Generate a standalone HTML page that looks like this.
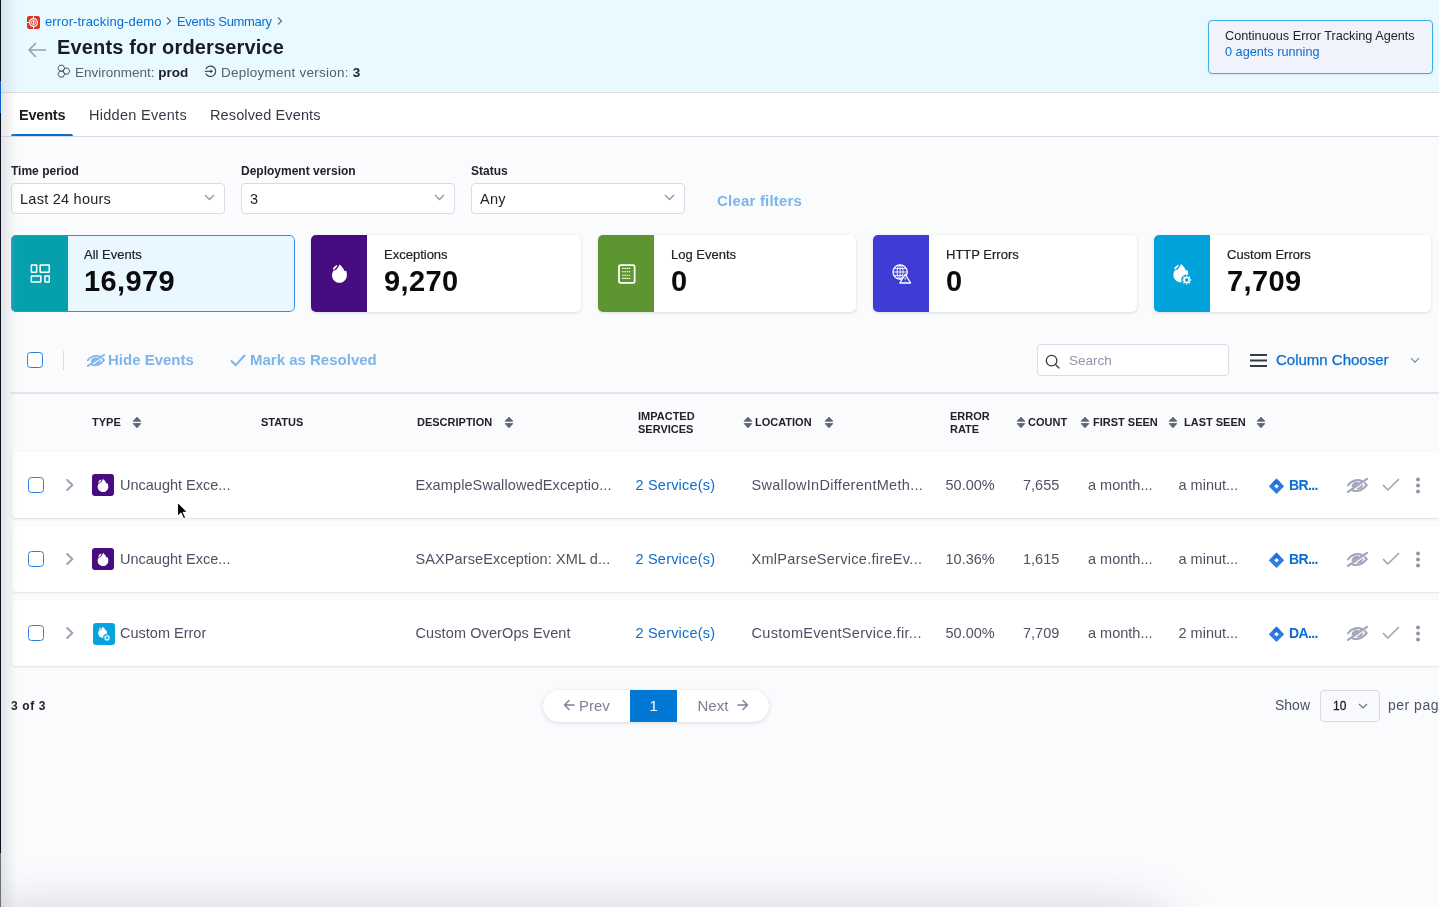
<!DOCTYPE html>
<html><head><meta charset="utf-8">
<style>
*{box-sizing:border-box;margin:0;padding:0}
html,body{width:1439px;height:907px;overflow:hidden;background:#FAFBFD;font-family:"Liberation Sans",sans-serif;color:#22222A}
#root{position:absolute;left:0;top:0;width:1439px;height:907px;overflow:hidden;will-change:transform;background:#FAFBFD}
.a{position:absolute;white-space:nowrap}
#hdr{position:absolute;left:0;top:0;width:1439px;height:93px;background:#E8F9FF;border-bottom:1px solid #D7D9E3}
#tabs{position:absolute;left:0;top:93px;width:1439px;height:44px;background:#fff;border-bottom:1px solid #D9DAE5}
.crumb{color:#0B6DD0;font-size:13px;line-height:13px}
.sub{color:#5A5C70;font-size:13.5px;line-height:14px}
.sub b{color:#22222A;font-weight:700}
.tab{font-size:14.5px;line-height:15px;color:#383946}
.lbl{font-size:12px;line-height:12px;font-weight:700;color:#22222A}
.dd{position:absolute;top:182.5px;width:214px;height:31.5px;background:#fff;border:1px solid #D9DAE5;border-radius:4px}
.ddt{font-size:14.5px;line-height:15px;color:#22222A}
.card{position:absolute;top:235px;height:77px;background:#fff;border-radius:5px;box-shadow:0 0 1px rgba(40,41,61,.08),0 1px 3px rgba(96,97,112,.18);overflow:hidden}
.card .ic{position:absolute;left:0;top:0;width:56px;height:77px}
.card .ct{position:absolute;left:73px;top:13px;font-size:13px;line-height:13px;color:#22222A;-webkit-text-stroke:0.2px #22222A}
.card .cn{position:absolute;left:73px;top:32px;font-size:29px;line-height:29px;font-weight:700;color:#0B0B0D;letter-spacing:0.4px}
.card .ov{position:absolute;left:0;top:0;right:0;bottom:0;border:1.5px solid #3C8DDF;border-radius:5px}
.th{font-size:11px;line-height:13px;font-weight:700;color:#22222A}
.row{position:absolute;left:12px;width:1440px;height:66px;background:#fff;border-radius:4px;box-shadow:0 0 1px rgba(40,41,61,.06),0 1px 2px rgba(96,97,112,.16)}
.td{font-size:14.5px;line-height:15px;color:#4F5163}
.lnk{color:#0B6DD0}
.cb{position:absolute;width:16px;height:16px;border:1.5px solid #2A80DC;border-radius:3.5px;background:#fff}
</style></head>
<body><div id="root">
<div id="hdr"></div>
<svg class="a" style="left:27px;top:15.5px" width="13" height="13" viewBox="0 0 13 13"><rect width="13" height="13" rx="2.2" fill="#DA3526"/><circle cx="6.5" cy="6.5" r="3.9" fill="none" stroke="#fff" stroke-width="1.2"/><circle cx="6.5" cy="6.5" r="2" fill="none" stroke="#fff" stroke-width="0.9"/><path d="M6.5 5.2V7.6" stroke="#fff" stroke-width="1.1"/><path d="M6.5 0V2.2M6.5 10.8V13M0 6.5H2.2" stroke="#fff" stroke-width="0.9"/></svg>
<div class="a crumb" style="left:45px;top:15px;letter-spacing:0.13px">error-tracking-demo</div>
<svg class="a" style="left:166px;top:16px" width="6" height="10" viewBox="0 0 6 10"><path d="M1 1.5L4.5 5L1 8.5" fill="none" stroke="#6B6D85" stroke-width="1.2"/></svg>
<div class="a crumb" style="left:177px;top:15px;letter-spacing:-0.3px">Events Summary</div>
<svg class="a" style="left:277px;top:16px" width="6" height="10" viewBox="0 0 6 10"><path d="M1 1.5L4.5 5L1 8.5" fill="none" stroke="#6B6D85" stroke-width="1.2"/></svg>
<svg class="a" style="left:27px;top:42px" width="20" height="16" viewBox="0 0 20 16"><path d="M18.5 8H2M8.5 1.5L2 8L8.5 14.5" fill="none" stroke="#9A9BAE" stroke-width="1.6" stroke-linecap="round" stroke-linejoin="round"/></svg>
<div class="a" style="left:57px;top:37px;font-size:20px;line-height:20px;font-weight:700;color:#1B1B22;letter-spacing:0.16px">Events for orderservice</div>
<svg class="a" style="left:57px;top:64px" width="14" height="15" viewBox="0 0 14 15"><path d="M7.70 4.20L6.00 7.14L2.60 7.14L0.90 4.20L2.60 1.26L6.00 1.26ZM7.70 10.10L6.00 13.04L2.60 13.04L0.90 10.10L2.60 7.16L6.00 7.16ZM12.80 7.15L11.10 10.09L7.70 10.09L6.00 7.15L7.70 4.21L11.10 4.21Z" fill="none" stroke="#4F5163" stroke-width="1" stroke-linejoin="round"/></svg>
<div class="a sub" style="left:75px;top:66px">Environment: <b>prod</b></div>
<svg class="a" style="left:204px;top:65px" width="13" height="13" viewBox="0 0 13 13"><path d="M1.79 4.1A5.2 5.2 0 1 1 1.79 8.5" fill="none" stroke="#383946" stroke-width="1.1"/><path d="M0.8 6.3H7" stroke="#383946" stroke-width="1.1"/><path d="M6.3 4.4L9.1 6.3L6.3 8.2Z" fill="#383946"/></svg>
<div class="a sub" style="left:221px;top:66px;letter-spacing:0.25px">Deployment version: <b>3</b></div>
<div class="a" style="left:1208px;top:20px;width:225px;height:54px;background:#F0F3FC;border:1.5px solid #3DADEB;border-radius:4px;box-shadow:0 1px 3px rgba(0,0,0,.08)"></div>
<div class="a" style="left:1225px;top:30px;font-size:12.7px;line-height:13px;color:#22222A">Continuous Error Tracking Agents</div>
<div class="a" style="left:1225px;top:46px;font-size:12.7px;line-height:13px;color:#0B6DD0">0 agents running</div>
<div id="tabs"></div>
<div class="a tab" style="left:19px;top:108px;font-weight:700;color:#1B1B22;letter-spacing:-0.2px">Events</div>
<div class="a tab" style="left:89px;top:108px;letter-spacing:0.28px">Hidden Events</div>
<div class="a tab" style="left:210px;top:108px;letter-spacing:0.12px">Resolved Events</div>
<div class="a" style="left:11px;top:134px;width:62px;height:2px;background:#0B6DD0;border-radius:2px 2px 0 0"></div>
<div class="a lbl" style="left:11px;top:165px">Time period</div>
<div class="dd" style="left:11px"></div>
<div class="a ddt" style="left:20px;top:192px;letter-spacing:0.25px">Last 24 hours</div>
<svg class="a" style="left:204px;top:194px" width="11" height="7" viewBox="0 0 11 7"><path d="M1 1L5.5 5.5L10 1" fill="none" stroke="#9293AB" stroke-width="1.3"/></svg>
<div class="a lbl" style="left:241px;top:165px">Deployment version</div>
<div class="dd" style="left:241px"></div>
<div class="a ddt" style="left:250px;top:192px;letter-spacing:0.25px">3</div>
<svg class="a" style="left:434px;top:194px" width="11" height="7" viewBox="0 0 11 7"><path d="M1 1L5.5 5.5L10 1" fill="none" stroke="#9293AB" stroke-width="1.3"/></svg>
<div class="a lbl" style="left:471px;top:165px">Status</div>
<div class="dd" style="left:471px"></div>
<div class="a ddt" style="left:480px;top:192px;letter-spacing:0.25px">Any</div>
<svg class="a" style="left:664px;top:194px" width="11" height="7" viewBox="0 0 11 7"><path d="M1 1L5.5 5.5L10 1" fill="none" stroke="#9293AB" stroke-width="1.3"/></svg>
<div class="a" style="left:717px;top:193px;font-size:15px;line-height:15px;font-weight:700;color:#7DB5E8;letter-spacing:0.2px">Clear filters</div>
<div class="card" style="left:11px;width:284px;background:#E9F8FE;box-shadow:none;"><div class="ic" style="background:#05A0AC;width:57px"><svg style="position:absolute;left:19px;top:29px" width="21" height="20" viewBox="0 0 21 20"><g fill="none" stroke="#fff" stroke-width="1.5"><rect x="1.35" y="1.05" width="5.3" height="7.1" rx="0.3"/><rect x="10.15" y="1.05" width="9.1" height="7.1" rx="0.3"/><rect x="1.35" y="12.05" width="9.5" height="6" rx="0.3"/><rect x="14.95" y="12.05" width="4.3" height="6" rx="0.3"/></g></svg></div><div class="ct">All Events</div><div class="cn">16,979</div><div class="ov"></div></div>
<div class="card" style="left:311px;width:270px;"><div class="ic" style="background:#460C80;"><svg style="position:absolute;left:21px;top:29px" width="16" height="20" viewBox="0 0 16 20"><path d="M7.6 0.4C9.6 2 11.6 4.4 12.6 7.2L14.1 6.5C14.6 7.8 14.9 9.2 14.9 10.9C14.9 15.3 11.6 18.7 7.45 18.7C3.3 18.7 0 15.4 0 11.4C0 9.6 0.6 8.1 1.5 6.7C3.3 6.6 5 5.3 6 3.6L7.6 0.4Z" fill="#fff"/><path d="M0.9 6C0.7 4 2.6 1.6 5.4 1.1C5.2 3.2 3.2 5.6 0.9 6Z" fill="#fff"/></svg></div><div class="ct">Exceptions</div><div class="cn">9,270</div></div>
<div class="card" style="left:598px;width:258px;"><div class="ic" style="background:#5D9531;"><svg style="position:absolute;left:19px;top:28px" width="19" height="21" viewBox="0 0 19 21"><g fill="none" stroke="#fff"><rect x="2" y="2.2" width="15.6" height="17.6" rx="1.6" stroke-width="1.8"/><path d="M5.1 5.4H13.7M5.1 8.7H13.7M5.1 12.3H13.7M5.1 15.4H13.7" stroke-width="1.1" stroke-dasharray="1.6 0.6"/></g></svg></div><div class="ct">Log Events</div><div class="cn">0</div></div>
<div class="card" style="left:873px;width:264px;"><div class="ic" style="background:#3F3CD6;"><svg style="position:absolute;left:18px;top:28px" width="22" height="22" viewBox="0 0 22 22"><g fill="none" stroke="#fff"><circle cx="9.1" cy="9" r="7.1" stroke-width="1.3"/><ellipse cx="9.1" cy="9" rx="3" ry="7.1" stroke-width="0.9"/><path d="M9.1 2V16M2 9H16.3M3.2 5.6H15M3.2 12.4H12" stroke-width="0.9"/></g><path d="M14.2 11.3L19.6 20H8.8Z" fill="#3F3CD6" stroke="#fff" stroke-width="1.3" stroke-linejoin="round"/><path d="M14.2 14.4V16.8M14.2 17.8V18.4" stroke="#fff" stroke-width="1"/></svg></div><div class="ct">HTTP Errors</div><div class="cn">0</div></div>
<div class="card" style="left:1154px;width:277px;"><div class="ic" style="background:#00A3DC;"><svg style="position:absolute;left:19px;top:28px" width="20" height="22" viewBox="0 0 20 22"><g transform="translate(0.4 0.6)"><path d="M7.6 0.4C9.6 2 11.6 4.4 12.6 7.2L14.1 6.5C14.6 7.8 14.9 9.2 14.9 10.9C14.9 15.3 11.6 18.7 7.45 18.7C3.3 18.7 0 15.4 0 11.4C0 9.6 0.6 8.1 1.5 6.7C3.3 6.6 5 5.3 6 3.6L7.6 0.4Z" fill="#fff"/><path d="M0.9 6C0.7 4 2.6 1.6 5.4 1.1C5.2 3.2 3.2 5.6 0.9 6Z" fill="#fff"/></g><circle cx="13.7" cy="17" r="5.6" fill="#00A3DC"/><g stroke="#fff" fill="none"><circle cx="13.7" cy="17" r="2.5" stroke-width="1.5"/><path d="M13.7 12.4V13.8M13.7 20.2V21.6M9.1 17H10.5M16.9 17H18.3M10.45 13.75L11.45 14.75M15.95 19.25L16.95 20.25M10.45 20.25L11.45 19.25M15.95 14.75L16.95 13.75" stroke-width="1.6"/></g></svg></div><div class="ct">Custom Errors</div><div class="cn">7,709</div></div>
<div class="cb" style="left:27px;top:352px"></div>
<div class="a" style="left:63px;top:351px;width:1px;height:19px;background:#D9DAE5"></div>
<svg class="a" style="left:87px;top:354px" width="18" height="13" viewBox="0 0 20 14.5"><path d="M0.8 13.4L19.6 0.6" stroke="#7DB5E8" stroke-width="2" stroke-linecap="round"/><path d="M0.9 7C3.8 2.6 9.6 0.9 14.6 3.1" fill="none" stroke="#7DB5E8" stroke-width="2" stroke-linecap="round"/><path d="M4.2 8.6C4.4 5.6 7 3.6 10.2 3.9L12.4 4.6L5.6 9.3Z" fill="#7DB5E8"/><path d="M5.4 12C10 13.6 15.6 11.6 18.9 7C18.5 6.3 17.8 5.6 17.2 5" fill="none" stroke="#7DB5E8" stroke-width="2" stroke-linecap="round"/><path d="M15.4 5.8C15.6 9 13 11.4 9.8 11.2L8.6 10.9Z" fill="#7DB5E8"/></svg>
<div class="a" style="left:108px;top:352px;font-size:15px;line-height:15px;font-weight:700;color:#7DB5E8">Hide Events</div>
<svg class="a" style="left:230px;top:354px" width="16" height="13" viewBox="0 0 16 13"><path d="M1.5 7L5.8 11.2L14.5 1.5" fill="none" stroke="#7DB5E8" stroke-width="2" stroke-linecap="round" stroke-linejoin="round"/></svg>
<div class="a" style="left:250px;top:352px;font-size:15px;line-height:15px;font-weight:700;color:#7DB5E8">Mark as Resolved</div>
<div class="a" style="left:1037px;top:344px;width:192px;height:32px;background:#fff;border:1px solid #D9DAE5;border-radius:4px"></div>
<svg class="a" style="left:1045px;top:354px" width="15" height="15" viewBox="0 0 15 15"><g fill="none" stroke="#383946" stroke-width="1.3"><circle cx="6.6" cy="6.6" r="5.3"/><path d="M10.5 10.5L14 14" stroke-linecap="round"/></g></svg>
<div class="a" style="left:1069px;top:354px;font-size:13.5px;line-height:14px;color:#9293AB">Search</div>
<svg class="a" style="left:1249px;top:353px" width="19" height="15" viewBox="0 0 19 15"><path d="M1 2H18M1 7.5H18M1 13H18" stroke="#383946" stroke-width="2.2"/></svg>
<div class="a" style="left:1276px;top:352px;font-size:15px;line-height:15px;color:#0B6DD0;-webkit-text-stroke:0.25px #0B6DD0">Column Chooser</div>
<svg class="a" style="left:1410px;top:357px" width="10" height="7" viewBox="0 0 10 7"><path d="M1 1.2L5 5.2L9 1.2" fill="none" stroke="#7C7E96" stroke-width="1.1"/></svg>
<div class="a" style="left:11px;top:392px;width:1428px;height:2px;background:#E3E4EC"></div>
<div class="a th" style="left:92px;top:416px">TYPE</div>
<div class="a th" style="left:261px;top:416px">STATUS</div>
<div class="a th" style="left:417px;top:416px">DESCRIPTION</div>
<div class="a th" style="left:755px;top:416px">LOCATION</div>
<div class="a th" style="left:1028px;top:416px">COUNT</div>
<div class="a th" style="left:1093px;top:416px">FIRST SEEN</div>
<div class="a th" style="left:1184px;top:416px">LAST SEEN</div>
<div class="a th" style="left:638px;top:409.5px">IMPACTED<br>SERVICES</div>
<div class="a th" style="left:950px;top:409.5px">ERROR<br>RATE</div>
<svg class="a" style="left:131.8px;top:416.4px" width="10" height="13" viewBox="0 0 10 13"><path d="M5 1.2L8.8 5.2H1.2Z M5 11.8L8.8 7.6H1.2Z" fill="#5F6178" stroke="#5F6178" stroke-width="0.9" stroke-linejoin="round"/></svg>
<svg class="a" style="left:503.8px;top:416.4px" width="10" height="13" viewBox="0 0 10 13"><path d="M5 1.2L8.8 5.2H1.2Z M5 11.8L8.8 7.6H1.2Z" fill="#5F6178" stroke="#5F6178" stroke-width="0.9" stroke-linejoin="round"/></svg>
<svg class="a" style="left:742.8px;top:416.4px" width="10" height="13" viewBox="0 0 10 13"><path d="M5 1.2L8.8 5.2H1.2Z M5 11.8L8.8 7.6H1.2Z" fill="#5F6178" stroke="#5F6178" stroke-width="0.9" stroke-linejoin="round"/></svg>
<svg class="a" style="left:823.8px;top:416.4px" width="10" height="13" viewBox="0 0 10 13"><path d="M5 1.2L8.8 5.2H1.2Z M5 11.8L8.8 7.6H1.2Z" fill="#5F6178" stroke="#5F6178" stroke-width="0.9" stroke-linejoin="round"/></svg>
<svg class="a" style="left:1015.8px;top:416.4px" width="10" height="13" viewBox="0 0 10 13"><path d="M5 1.2L8.8 5.2H1.2Z M5 11.8L8.8 7.6H1.2Z" fill="#5F6178" stroke="#5F6178" stroke-width="0.9" stroke-linejoin="round"/></svg>
<svg class="a" style="left:1079.8px;top:416.4px" width="10" height="13" viewBox="0 0 10 13"><path d="M5 1.2L8.8 5.2H1.2Z M5 11.8L8.8 7.6H1.2Z" fill="#5F6178" stroke="#5F6178" stroke-width="0.9" stroke-linejoin="round"/></svg>
<svg class="a" style="left:1168.3px;top:416.4px" width="10" height="13" viewBox="0 0 10 13"><path d="M5 1.2L8.8 5.2H1.2Z M5 11.8L8.8 7.6H1.2Z" fill="#5F6178" stroke="#5F6178" stroke-width="0.9" stroke-linejoin="round"/></svg>
<svg class="a" style="left:1256.3px;top:416.4px" width="10" height="13" viewBox="0 0 10 13"><path d="M5 1.2L8.8 5.2H1.2Z M5 11.8L8.8 7.6H1.2Z" fill="#5F6178" stroke="#5F6178" stroke-width="0.9" stroke-linejoin="round"/></svg>
<div class="row" style="top:452px"></div>
<div class="cb" style="left:28px;top:477px"></div>
<svg class="a" style="left:65px;top:478px" width="10" height="14" viewBox="0 0 10 14"><path d="M2.2 2L7.4 7L2.2 12" fill="none" stroke="#9C9EB3" stroke-width="1.9" stroke-linecap="round" stroke-linejoin="round"/></svg>
<svg class="a" style="left:92px;top:474px" width="22" height="22" viewBox="0 0 22 22"><rect width="22" height="22" rx="3" fill="#460C80"/><g transform="translate(5.6 4.6) scale(0.72)"><path d="M7.6 0.4C9.6 2 11.6 4.4 12.6 7.2L14.1 6.5C14.6 7.8 14.9 9.2 14.9 10.9C14.9 15.3 11.6 18.7 7.45 18.7C3.3 18.7 0 15.4 0 11.4C0 9.6 0.6 8.1 1.5 6.7C3.3 6.6 5 5.3 6 3.6L7.6 0.4Z" fill="#fff"/><path d="M0.9 6C0.7 4 2.6 1.6 5.4 1.1C5.2 3.2 3.2 5.6 0.9 6Z" fill="#fff"/></g></svg>
<div class="a td" style="left:120px;top:478.3px">Uncaught Exce...</div>
<div class="a td" style="left:415.5px;top:478.3px;letter-spacing:0.1px">ExampleSwallowedExceptio...</div>
<div class="a td lnk" style="left:635.5px;top:478.3px;letter-spacing:0.2px">2 Service(s)</div>
<div class="a td" style="left:751.5px;top:478.3px;letter-spacing:0.3px">SwallowInDifferentMeth...</div>
<div class="a td" style="left:945.5px;top:478.3px">50.00%</div>
<div class="a td" style="left:1023px;top:478.3px">7,655</div>
<div class="a td" style="left:1088px;top:478.3px">a month...</div>
<div class="a td" style="left:1178.5px;top:478.3px">a minut...</div>
<svg class="a" style="left:1268px;top:478px" width="17" height="17" viewBox="0 0 17 17"><path d="M8.5 0.5L16.2 8.2L8.5 15.9L0.8 8.2Z" fill="#2A7DE8"/><path d="M8.5 0.5L4.6 4.4L8.5 8.2L12.4 4.4Z" fill="#1D5FD0" opacity="0.5"/><path d="M8.5 5.9L10.8 8.2L8.5 10.5L6.2 8.2Z" fill="#fff"/></svg>
<div class="a td" style="left:1289px;top:478.3px;font-weight:700;color:#0B6DD0;font-size:14px;letter-spacing:-0.6px">BR...</div>
<svg class="a" style="left:1346.5px;top:477.5px" width="21" height="15" viewBox="0 0 20 14.5"><path d="M0.8 13.4L19.6 0.6" stroke="#A3A5BA" stroke-width="2.1" stroke-linecap="round"/><path d="M0.9 7C3.8 2.6 9.6 0.9 14.6 3.1" fill="none" stroke="#A3A5BA" stroke-width="2.1" stroke-linecap="round"/><path d="M4.2 8.6C4.4 5.6 7 3.6 10.2 3.9L12.4 4.6L5.6 9.3Z" fill="#A3A5BA"/><path d="M5.4 12C10 13.6 15.6 11.6 18.9 7C18.5 6.3 17.8 5.6 17.2 5" fill="none" stroke="#A3A5BA" stroke-width="2.1" stroke-linecap="round"/><path d="M15.4 5.8C15.6 9 13 11.4 9.8 11.2L8.6 10.9Z" fill="#A3A5BA"/></svg>
<svg class="a" style="left:1382px;top:478px" width="18" height="14" viewBox="0 0 18 14"><path d="M1.5 7.5L5.8 12L16.5 1.5" fill="none" stroke="#A3A5BA" stroke-width="1.7" stroke-linecap="round" stroke-linejoin="round"/></svg>
<svg class="a" style="left:1415px;top:476.5px" width="6" height="17" viewBox="0 0 6 17"><circle cx="3" cy="2.4" r="2" fill="#9293AB"/><circle cx="3" cy="8.5" r="2" fill="#9293AB"/><circle cx="3" cy="14.6" r="2" fill="#9293AB"/></svg>
<div class="row" style="top:526px"></div>
<div class="cb" style="left:28px;top:551px"></div>
<svg class="a" style="left:65px;top:552px" width="10" height="14" viewBox="0 0 10 14"><path d="M2.2 2L7.4 7L2.2 12" fill="none" stroke="#9C9EB3" stroke-width="1.9" stroke-linecap="round" stroke-linejoin="round"/></svg>
<svg class="a" style="left:92px;top:548px" width="22" height="22" viewBox="0 0 22 22"><rect width="22" height="22" rx="3" fill="#460C80"/><g transform="translate(5.6 4.6) scale(0.72)"><path d="M7.6 0.4C9.6 2 11.6 4.4 12.6 7.2L14.1 6.5C14.6 7.8 14.9 9.2 14.9 10.9C14.9 15.3 11.6 18.7 7.45 18.7C3.3 18.7 0 15.4 0 11.4C0 9.6 0.6 8.1 1.5 6.7C3.3 6.6 5 5.3 6 3.6L7.6 0.4Z" fill="#fff"/><path d="M0.9 6C0.7 4 2.6 1.6 5.4 1.1C5.2 3.2 3.2 5.6 0.9 6Z" fill="#fff"/></g></svg>
<div class="a td" style="left:120px;top:552.3px">Uncaught Exce...</div>
<div class="a td" style="left:415.5px;top:552.3px;letter-spacing:0.1px">SAXParseException: XML d...</div>
<div class="a td lnk" style="left:635.5px;top:552.3px;letter-spacing:0.2px">2 Service(s)</div>
<div class="a td" style="left:751.5px;top:552.3px;letter-spacing:0.3px">XmlParseService.fireEv...</div>
<div class="a td" style="left:945.5px;top:552.3px">10.36%</div>
<div class="a td" style="left:1023px;top:552.3px">1,615</div>
<div class="a td" style="left:1088px;top:552.3px">a month...</div>
<div class="a td" style="left:1178.5px;top:552.3px">a minut...</div>
<svg class="a" style="left:1268px;top:552px" width="17" height="17" viewBox="0 0 17 17"><path d="M8.5 0.5L16.2 8.2L8.5 15.9L0.8 8.2Z" fill="#2A7DE8"/><path d="M8.5 0.5L4.6 4.4L8.5 8.2L12.4 4.4Z" fill="#1D5FD0" opacity="0.5"/><path d="M8.5 5.9L10.8 8.2L8.5 10.5L6.2 8.2Z" fill="#fff"/></svg>
<div class="a td" style="left:1289px;top:552.3px;font-weight:700;color:#0B6DD0;font-size:14px;letter-spacing:-0.6px">BR...</div>
<svg class="a" style="left:1346.5px;top:551.5px" width="21" height="15" viewBox="0 0 20 14.5"><path d="M0.8 13.4L19.6 0.6" stroke="#A3A5BA" stroke-width="2.1" stroke-linecap="round"/><path d="M0.9 7C3.8 2.6 9.6 0.9 14.6 3.1" fill="none" stroke="#A3A5BA" stroke-width="2.1" stroke-linecap="round"/><path d="M4.2 8.6C4.4 5.6 7 3.6 10.2 3.9L12.4 4.6L5.6 9.3Z" fill="#A3A5BA"/><path d="M5.4 12C10 13.6 15.6 11.6 18.9 7C18.5 6.3 17.8 5.6 17.2 5" fill="none" stroke="#A3A5BA" stroke-width="2.1" stroke-linecap="round"/><path d="M15.4 5.8C15.6 9 13 11.4 9.8 11.2L8.6 10.9Z" fill="#A3A5BA"/></svg>
<svg class="a" style="left:1382px;top:552px" width="18" height="14" viewBox="0 0 18 14"><path d="M1.5 7.5L5.8 12L16.5 1.5" fill="none" stroke="#A3A5BA" stroke-width="1.7" stroke-linecap="round" stroke-linejoin="round"/></svg>
<svg class="a" style="left:1415px;top:550.5px" width="6" height="17" viewBox="0 0 6 17"><circle cx="3" cy="2.4" r="2" fill="#9293AB"/><circle cx="3" cy="8.5" r="2" fill="#9293AB"/><circle cx="3" cy="14.6" r="2" fill="#9293AB"/></svg>
<div class="row" style="top:600px"></div>
<div class="cb" style="left:28px;top:625px"></div>
<svg class="a" style="left:65px;top:626px" width="10" height="14" viewBox="0 0 10 14"><path d="M2.2 2L7.4 7L2.2 12" fill="none" stroke="#9C9EB3" stroke-width="1.9" stroke-linecap="round" stroke-linejoin="round"/></svg>
<svg class="a" style="left:92.5px;top:622.5px" width="22" height="22" viewBox="0 0 22 22"><rect width="22" height="22" rx="3" fill="#06A2DE"/><g transform="translate(5.2 3.6) scale(0.6)"><path d="M7.6 0.4C9.6 2 11.6 4.4 12.6 7.2L14.1 6.5C14.6 7.8 14.9 9.2 14.9 10.9C14.9 15.3 11.6 18.7 7.45 18.7C3.3 18.7 0 15.4 0 11.4C0 9.6 0.6 8.1 1.5 6.7C3.3 6.6 5 5.3 6 3.6L7.6 0.4Z" fill="#fff"/><path d="M0.9 6C0.7 4 2.6 1.6 5.4 1.1C5.2 3.2 3.2 5.6 0.9 6Z" fill="#fff"/></g><circle cx="14" cy="14.8" r="4" fill="#06A2DE"/><g stroke="#fff" fill="none"><circle cx="14" cy="14.8" r="1.8" stroke-width="1.1"/><path d="M14 11.6V12.6M14 17V18M10.8 14.8H11.8M16.2 14.8H17.2M11.7 12.5L12.4 13.2M15.6 16.4L16.3 17.1M11.7 17.1L12.4 16.4M15.6 13.2L16.3 12.5" stroke-width="1.1"/></g></svg>
<div class="a td" style="left:120px;top:626.3px">Custom Error</div>
<div class="a td" style="left:415.5px;top:626.3px;letter-spacing:0.1px">Custom OverOps Event</div>
<div class="a td lnk" style="left:635.5px;top:626.3px;letter-spacing:0.2px">2 Service(s)</div>
<div class="a td" style="left:751.5px;top:626.3px;letter-spacing:0.3px">CustomEventService.fir...</div>
<div class="a td" style="left:945.5px;top:626.3px">50.00%</div>
<div class="a td" style="left:1023px;top:626.3px">7,709</div>
<div class="a td" style="left:1088px;top:626.3px">a month...</div>
<div class="a td" style="left:1178.5px;top:626.3px">2 minut...</div>
<svg class="a" style="left:1268px;top:626px" width="17" height="17" viewBox="0 0 17 17"><path d="M8.5 0.5L16.2 8.2L8.5 15.9L0.8 8.2Z" fill="#2A7DE8"/><path d="M8.5 0.5L4.6 4.4L8.5 8.2L12.4 4.4Z" fill="#1D5FD0" opacity="0.5"/><path d="M8.5 5.9L10.8 8.2L8.5 10.5L6.2 8.2Z" fill="#fff"/></svg>
<div class="a td" style="left:1289px;top:626.3px;font-weight:700;color:#0B6DD0;font-size:14px;letter-spacing:-0.6px">DA...</div>
<svg class="a" style="left:1346.5px;top:625.5px" width="21" height="15" viewBox="0 0 20 14.5"><path d="M0.8 13.4L19.6 0.6" stroke="#A3A5BA" stroke-width="2.1" stroke-linecap="round"/><path d="M0.9 7C3.8 2.6 9.6 0.9 14.6 3.1" fill="none" stroke="#A3A5BA" stroke-width="2.1" stroke-linecap="round"/><path d="M4.2 8.6C4.4 5.6 7 3.6 10.2 3.9L12.4 4.6L5.6 9.3Z" fill="#A3A5BA"/><path d="M5.4 12C10 13.6 15.6 11.6 18.9 7C18.5 6.3 17.8 5.6 17.2 5" fill="none" stroke="#A3A5BA" stroke-width="2.1" stroke-linecap="round"/><path d="M15.4 5.8C15.6 9 13 11.4 9.8 11.2L8.6 10.9Z" fill="#A3A5BA"/></svg>
<svg class="a" style="left:1382px;top:626px" width="18" height="14" viewBox="0 0 18 14"><path d="M1.5 7.5L5.8 12L16.5 1.5" fill="none" stroke="#A3A5BA" stroke-width="1.7" stroke-linecap="round" stroke-linejoin="round"/></svg>
<svg class="a" style="left:1415px;top:624.5px" width="6" height="17" viewBox="0 0 6 17"><circle cx="3" cy="2.4" r="2" fill="#9293AB"/><circle cx="3" cy="8.5" r="2" fill="#9293AB"/><circle cx="3" cy="14.6" r="2" fill="#9293AB"/></svg>
<svg class="a" style="left:176px;top:501px" width="12" height="19" viewBox="0 0 12 19"><path d="M1.5 1.2V15.5L5 12.2L7.6 17.8L9.8 16.8L7.3 11.4H11.8Z" fill="#000" stroke="#fff" stroke-width="1.1" stroke-linejoin="round"/></svg>
<div class="a" style="left:11px;top:700px;font-size:12px;line-height:12px;font-weight:700;color:#22222A;letter-spacing:0.6px">3 of 3</div>
<div class="a" style="left:543px;top:690px;width:226px;height:32px;background:#fff;border-radius:16px;box-shadow:0 0 1px rgba(40,41,61,.08),0 1px 4px rgba(96,97,112,.18);overflow:hidden"><div style="position:absolute;left:87px;top:0;width:47px;height:32px;background:#0278D5"></div></div>
<svg class="a" style="left:563px;top:699px" width="12" height="12" viewBox="0 0 12 12"><path d="M11 6H1.5M6 1.5L1.5 6L6 10.5" fill="none" stroke="#7C7E96" stroke-width="1.4" stroke-linecap="round" stroke-linejoin="round"/></svg>
<div class="a" style="left:579px;top:698px;font-size:15px;line-height:15px;color:#7C7E96">Prev</div>
<div class="a" style="left:649.5px;top:698px;font-size:15px;line-height:15px;color:#fff">1</div>
<div class="a" style="left:697.5px;top:698px;font-size:15px;line-height:15px;color:#7C7E96">Next</div>
<svg class="a" style="left:737px;top:699px" width="12" height="12" viewBox="0 0 12 12"><path d="M1 6H10.5M6 1.5L10.5 6L6 10.5" fill="none" stroke="#7C7E96" stroke-width="1.4" stroke-linecap="round" stroke-linejoin="round"/></svg>
<div class="a" style="left:1275px;top:698px;font-size:14px;line-height:14px;color:#4F5163">Show</div>
<div class="a" style="left:1320px;top:690px;width:60px;height:32px;background:#F9FAFC;border:1px solid #D9DAE5;border-radius:4px"></div>
<div class="a" style="left:1333px;top:700px;font-size:12px;line-height:12px;color:#22222A;-webkit-text-stroke:0.3px #22222A">10</div>
<svg class="a" style="left:1358px;top:703px" width="10" height="6" viewBox="0 0 10 6"><path d="M1 1L5 5L9 1" fill="none" stroke="#6B6D85" stroke-width="1.1"/></svg>
<div class="a" style="left:1388px;top:698px;font-size:14px;line-height:14px;color:#4F5163;letter-spacing:0.5px">per page</div>
<div class="a" style="left:-40px;top:912px;width:1220px;height:200px;border-radius:60px;box-shadow:0 0 40px 12px rgba(120,125,140,.22)"></div>
<div class="a" style="left:1px;top:0;width:16px;height:907px;background:linear-gradient(90deg,rgba(180,184,195,.35),rgba(180,184,195,0))"></div>
<div class="a" style="left:0;top:0;width:1px;height:853px;background:#0B1220"></div>
<div class="a" style="left:0;top:853px;width:1px;height:54px;background:#6E7078"></div>
<div class="a" style="left:0;top:81px;width:1px;height:32px;background:#0A62C9"></div>
</div></body></html>
